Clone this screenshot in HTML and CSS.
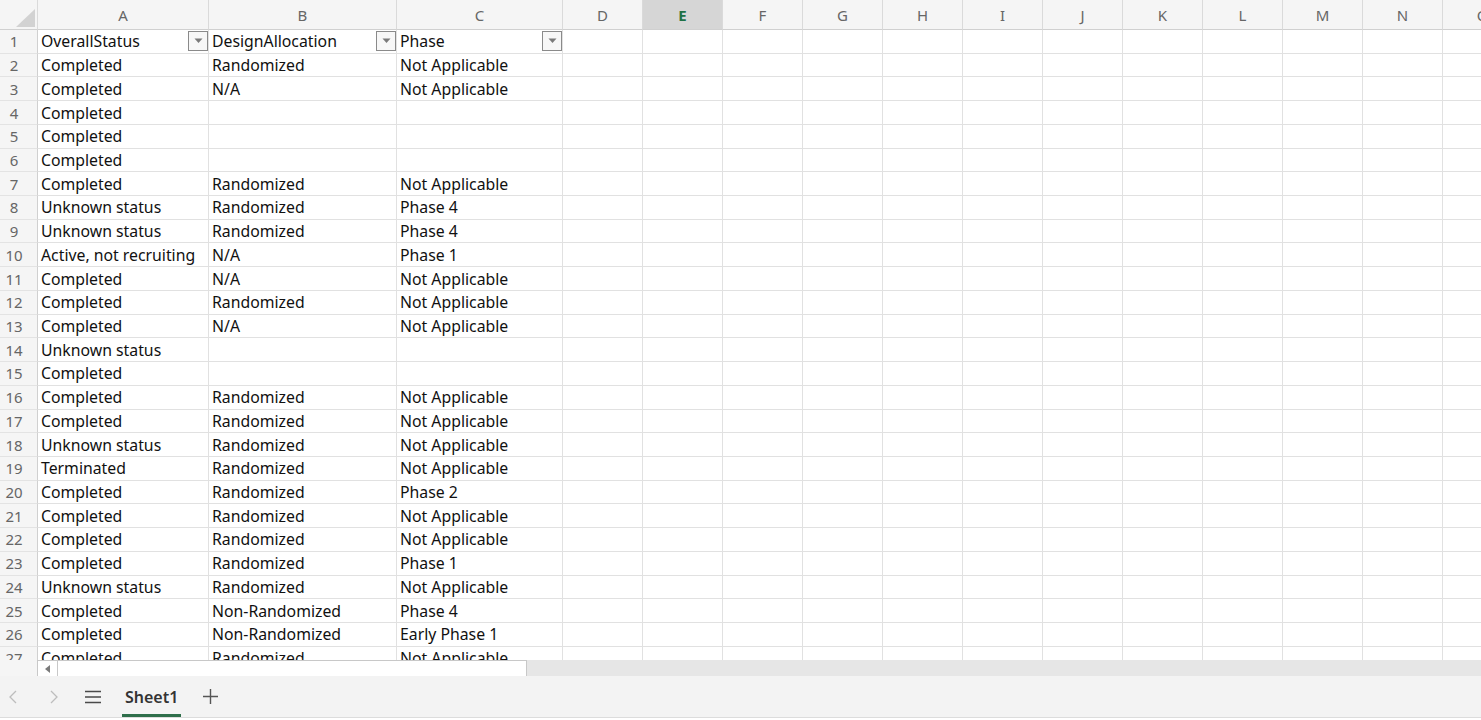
FILE: index.html
```html
<!DOCTYPE html>
<html lang="en">
<head>
    <meta charset="UTF-8">
    <title>Sheet1</title>
    <link rel="stylesheet" href="styles.css">
</head>
<body>
    <div class="sheet">
        <div class="grid" id="grid"></div>
    </div>

    <div class="hscroll">
        <div class="hscroll-corner"></div>
        <div class="hscroll-track">
            <div class="hscroll-btn">
                <svg width="8" height="10" viewBox="0 0 8 10"><polygon points="6,1 6,9 1,5" fill="#7a7a7a"/></svg>
            </div>
        </div>
        <div class="hscroll-rest"></div>
    </div>

    <div class="tabs">
        <span class="tab-nav">
            <svg width="10" height="16" viewBox="0 0 10 16"><polyline points="8,2 2,8 8,14" fill="none" stroke="#bdbdbd" stroke-width="1.3"/></svg>
        </span>
        <span class="tab-nav">
            <svg width="10" height="16" viewBox="0 0 10 16"><polyline points="2,2 8,8 2,14" fill="none" stroke="#bdbdbd" stroke-width="1.3"/></svg>
        </span>
        <span class="tab-menu">
            <svg width="16" height="14" viewBox="0 0 16 14"><path d="M0 1.5H16M0 7H16M0 12.5H16" stroke="#4a4a4a" stroke-width="1.4"/></svg>
        </span>
        <span class="tab active">Sheet1</span>
        <span class="tab-add">
            <svg width="15" height="15" viewBox="0 0 15 15"><path d="M7.5 0V15M0 7.5H15" stroke="#555" stroke-width="1.4"/></svg>
        </span>
    </div>

    <script>
        const cols = ['A','B','C','D','E','F','G','H','I','J','K','L','M','N','O'];
        const rows = [
            ['OverallStatus', 'DesignAllocation', 'Phase'],
            ['Completed', 'Randomized', 'Not Applicable'],
            ['Completed', 'N/A', 'Not Applicable'],
            ['Completed', '', ''],
            ['Completed', '', ''],
            ['Completed', '', ''],
            ['Completed', 'Randomized', 'Not Applicable'],
            ['Unknown status', 'Randomized', 'Phase 4'],
            ['Unknown status', 'Randomized', 'Phase 4'],
            ['Active, not recruiting', 'N/A', 'Phase 1'],
            ['Completed', 'N/A', 'Not Applicable'],
            ['Completed', 'Randomized', 'Not Applicable'],
            ['Completed', 'N/A', 'Not Applicable'],
            ['Unknown status', '', ''],
            ['Completed', '', ''],
            ['Completed', 'Randomized', 'Not Applicable'],
            ['Completed', 'Randomized', 'Not Applicable'],
            ['Unknown status', 'Randomized', 'Not Applicable'],
            ['Terminated', 'Randomized', 'Not Applicable'],
            ['Completed', 'Randomized', 'Phase 2'],
            ['Completed', 'Randomized', 'Not Applicable'],
            ['Completed', 'Randomized', 'Not Applicable'],
            ['Completed', 'Randomized', 'Phase 1'],
            ['Unknown status', 'Randomized', 'Not Applicable'],
            ['Completed', 'Non-Randomized', 'Phase 4'],
            ['Completed', 'Non-Randomized', 'Early Phase 1'],
            ['Completed', 'Randomized', 'Not Applicable']
        ];

        const grid = document.getElementById('grid');

        function cell(cls, text) {
            const div = document.createElement('div');
            div.className = cls;
            if (text) div.textContent = text;
            grid.appendChild(div);
            return div;
        }

        // intestazione colonne
        const corner = cell('corner');
        corner.innerHTML = '<svg width="37" height="29" viewBox="0 0 37 29"><polygon points="35,9 35,27 16,27" fill="#d2d2d2"/></svg>';
        cols.forEach(c => cell(c === 'E' ? 'col-head selected' : 'col-head', c));

        rows.forEach((r, i) => {
            cell('row-head', String(i + 1));
            cols.forEach((c, j) => {
                const div = cell('cell', r[j] || '');
                if (i === 0 && j < 3) {
                    div.classList.add('filter');
                    const span = document.createElement('span');
                    span.className = 'filter-btn';
                    span.innerHTML = '<svg width="9" height="6" viewBox="0 0 9 6"><polygon points="0.5,0.5 8.5,0.5 4.5,5" fill="#7a7a7a"/></svg>';
                    div.appendChild(span);
                }
            });
        });
    </script>
</body>
</html>
```

FILE: styles.css
```css
body {
    margin: 0;
    width: 1481px;
    height: 720px;
    overflow: hidden;
    background-color: #fff;
    font-family: 'Noto Sans', 'Open Sans', sans-serif;
    display: flex;
    flex-direction: column;
}

.sheet {
    height: 660px;
    overflow: hidden;
    flex-shrink: 0;
}

.grid {
    display: grid;
    grid-template-columns: 38px 171px 188px 166px repeat(12, 80px);
    grid-template-rows: 30px;
    grid-auto-rows: 23.73px;
}

.corner,
.col-head,
.row-head {
    background-color: #f5f5f5;
    color: #666;
    box-sizing: border-box;
    border-right: 1px solid #dadada;
    border-bottom: 1px solid #d0d0d0;
}

.col-head {
    font-size: 15px;
    display: flex;
    align-items: center;
    justify-content: center;
    padding-top: 1px;
}

    .col-head.selected {
        background-color: #d6d6d6;
        color: #1e7145;
        font-weight: 700;
    }

.row-head {
    font-size: 15px;
    display: flex;
    align-items: center;
    justify-content: center;
    padding-right: 9px;
    border-bottom: 1px solid #e3e3e3;
    border-right: 1px solid #d0d0d0;
}

.cell {
    box-sizing: border-box;
    border-right: 1px solid #e1e1e1;
    border-bottom: 1px solid #e1e1e1;
    font-size: 15.8px;
    color: #111;
    padding-left: 3px;
    display: flex;
    align-items: center;
    white-space: nowrap;
    overflow: hidden;
}

    .cell.filter {
        justify-content: space-between;
    }

.filter-btn {
    width: 20px;
    height: 20px;
    box-sizing: border-box;
    border: 1px solid #8a8a8a;
    background-color: #f7f7f7;
    display: flex;
    align-items: center;
    justify-content: center;
    flex-shrink: 0;
}

.hscroll {
    height: 16px;
    display: flex;
    flex-shrink: 0;
}

.hscroll-corner {
    width: 37px;
    background-color: #f5f5f5;
}

.hscroll-track {
    width: 490px;
    box-sizing: border-box;
    background-color: #fff;
    border-top: 1px solid #c8c8c8;
    border-right: 1px solid #c8c8c8;
    display: flex;
}

.hscroll-btn {
    width: 21px;
    box-sizing: border-box;
    border-right: 1px solid #c8c8c8;
    border-left: 1px solid #c8c8c8;
    display: flex;
    align-items: center;
    justify-content: center;
}

.hscroll-rest {
    flex: 1;
    background-color: #e6e6e6;
}

.tabs {
    height: 41px;
    flex-shrink: 0;
    background-color: #f3f3f3;
    border-bottom: 1px solid #dcdcdc;
    display: flex;
    align-items: center;
    padding-left: 7px;
}

.tab-nav {
    width: 40px;
    display: flex;
    justify-content: flex-start;
    padding-left: 1px;
}

.tab-menu {
    margin-left: -4px;
    width: 37px;
    display: flex;
}

.tab {
    font-size: 16px;
    font-weight: 600;
    color: #333;
    height: 41px;
    box-sizing: border-box;
    padding: 0 3px;
    display: flex;
    align-items: center;
    border-bottom: 3px solid transparent;
    padding-top: 3px;
}

    .tab.active {
        border-bottom-color: #2e6e4a;
    }

.tab-add {
    margin-left: 22px;
    display: flex;
}
```
